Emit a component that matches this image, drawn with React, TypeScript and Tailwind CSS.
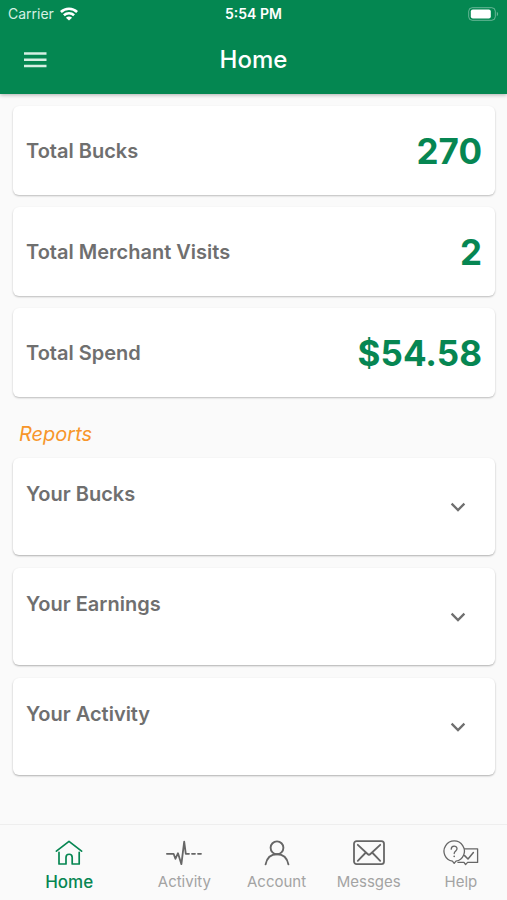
import { useState } from 'react'
import type { ReactNode } from 'react'

interface Total {
  label: string
  value: string
}

interface NavItem {
  label: string
  icon: ReactNode
}

const TOTALS: Total[] = [
  { label: 'Total Bucks', value: '270' },
  { label: 'Total Merchant Visits', value: '2' },
  { label: 'Total Spend', value: '$54.58' },
]

const REPORTS = ['Your Bucks', 'Your Earnings', 'Your Activity']

const NAV_ITEMS: NavItem[] = [
  { label: 'Home', icon: <HomeIcon /> },
  { label: 'Activity', icon: <ActivityIcon /> },
  { label: 'Account', icon: <AccountIcon /> },
  { label: 'Messges', icon: <MessagesIcon /> },
  { label: 'Help', icon: <HelpIcon /> },
]

function WifiIcon() {
  return (
    <svg width="18" height="14" viewBox="0 0 18 14" fill="none" stroke="white" strokeWidth="2.6">
      <path d="M0.9 5C5.4 0.7 12.6 0.7 17.1 5" />
      <path d="M3.9 8.3C6.8 5.6 11.2 5.6 14.1 8.3" />
      <path d="M9 13.6L5.9 10.7C7.6 9.1 10.4 9.1 12.1 10.7Z" fill="white" stroke="none" />
    </svg>
  )
}

function BatteryIcon() {
  return (
    <svg width="31" height="14" viewBox="0 0 31 14" fill="none">
      <rect x="0.7" y="0.7" width="26.6" height="12.6" rx="3.6" stroke="currentColor" strokeOpacity="0.4" />
      <rect x="2.8" y="2.4" width="20" height="9.2" rx="2" fill="currentColor" />
      <path d="M28.8 4.8C30.6 5.5 30.6 8.5 28.8 9.2Z" fill="currentColor" fillOpacity="0.4" />
    </svg>
  )
}

function MenuIcon() {
  return (
    <svg width="24" height="16" viewBox="0 0 24 16" fill="#d5f0e3">
      <path d="M1 0.3h22.5v2.5H1zM1 6.5h22.5V9H1zM1 12.7h22.5v2.5H1z" />
    </svg>
  )
}

function ChevronIcon({ open }: { open: boolean }) {
  return (
    <svg
      width="16"
      height="10"
      viewBox="0 0 16 10"
      fill="none"
      stroke="currentColor"
      strokeWidth="2.3"
      className={open ? 'rotate-180' : ''}
    >
      <path d="M1.6 1.6L8 8L14.4 1.6" />
    </svg>
  )
}

function HomeIcon() {
  return (
    <svg width="28" height="26" viewBox="0 0 28 26" fill="none" stroke="currentColor" strokeWidth="1.7" strokeLinecap="round" strokeLinejoin="round">
      <path d="M1.4 11.2L14 1.4L26.6 11.2" />
      <path d="M4 12.4V24H11V17.4C11 13.2 17.2 13.2 17.2 17.4V24H24.2V12.4" />
    </svg>
  )
}

function ActivityIcon() {
  return (
    <svg width="36" height="26" viewBox="0 0 36 26" fill="none" stroke="currentColor" strokeWidth="1.8" strokeLinecap="round" strokeLinejoin="round">
      <path d="M0.9 13.8H7.6L9.4 18.8L12 13.2L15.4 24.2L18.2 1.6L19.8 13.8H23" />
      <path d="M26 13.8H29M32 13.8H35" />
    </svg>
  )
}

function AccountIcon() {
  return (
    <svg width="26" height="26" viewBox="0 0 26 26" fill="none" stroke="currentColor" strokeWidth="1.9" strokeLinecap="round">
      <circle cx="13" cy="7.8" r="6.4" />
      <path d="M1.6 24.4C3 17.4 7.6 14.3 13 14.3C18.4 14.3 23 17.4 24.4 24.4" />
    </svg>
  )
}

function MessagesIcon() {
  return (
    <svg width="32" height="26" viewBox="0 0 32 26" fill="none" stroke="currentColor" strokeWidth="1.8" strokeLinecap="round" strokeLinejoin="round">
      <rect x="1" y="1.2" width="30" height="23" rx="2.6" />
      <path d="M4.8 4.8L14.6 14C15.5 14.9 16.5 14.9 17.4 14L27.2 4.8" />
      <path d="M4.8 20.8L12.4 13M27.2 20.8L19.6 13" />
    </svg>
  )
}

function HelpIcon() {
  return (
    <svg width="36" height="26" viewBox="0 0 36 26" fill="none" stroke="currentColor" strokeWidth="1.3" strokeLinecap="round" strokeLinejoin="round">
      <path d="M9.4 21.2A10.2 10.2 0 1 1 13 21.2L11.2 23.4Z" />
      <path d="M8.2 9.2C8.2 5.2 14 5.2 14 8.8C14 11 11.2 11 11.2 13.6" />
      <path d="M11.2 16.2V16.4" strokeWidth="1.6" />
      <path d="M21.4 8.8H34.6V22.4H24.6L22.6 24.6L21 22.4H15" />
      <path d="M21.6 15.6L25 19L30.4 12.6" strokeWidth="1.5" />
    </svg>
  )
}

function TotalCard({ label, value }: Total) {
  return (
    <div className="flex h-[89px] items-center justify-between rounded-md bg-white px-[13px] shadow-[0_1px_2px_rgba(0,0,0,0.25)]">
      <dt className="text-xl font-semibold text-[#6f6f6f]">{label}</dt>
      <dd className="text-[35px] leading-10 font-bold text-[#068652]">{value}</dd>
    </div>
  )
}

function ReportCard({ label }: { label: string }) {
  const [open, setOpen] = useState(false)

  return (
    <div className="rounded-md bg-white text-[#6f6f6f] shadow-[0_1px_2px_rgba(0,0,0,0.3)]">
      <button
        type="button"
        aria-expanded={open}
        onClick={() => setOpen(!open)}
        className="flex h-[97px] w-full items-center justify-between pr-[29px] pl-[13px] text-left"
      >
        <span className="self-start pt-[22px] text-xl font-semibold">{label}</span>
        <ChevronIcon open={open} />
      </button>
      {open && <p className="px-[13px] pb-4 text-base">No data yet.</p>}
    </div>
  )
}

export default function App() {
  const [active, setActive] = useState('Home')

  return (
    <div className="flex min-h-screen flex-col bg-[#fafafa] font-['Inter',sans-serif]">
      <header className="bg-[#048751] pb-0.5 text-white shadow-[0_1px_4px_rgba(0,0,0,0.3)]">
        {/* Status bar */}
        <div className="grid h-7 grid-cols-3 items-center px-2 text-sm">
          <div className="flex items-center gap-1.5 text-[#d5f0e3]">
            <span>Carrier</span>
            <WifiIcon />
          </div>
          <span className="text-center font-semibold">5:54 PM</span>
          <div className="flex justify-end">
            <BatteryIcon />
          </div>
        </div>

        {/* Toolbar */}
        <div className="grid h-16 grid-cols-[1fr_auto_1fr] items-center px-[23px]">
          <button type="button" aria-label="Menu" className="justify-self-start">
            <MenuIcon />
          </button>
          <h1 className="text-2xl font-medium">Home</h1>
        </div>
      </header>

      <main className="flex-1 pt-3 pr-3 pb-12 pl-[13px]">
        <dl className="flex flex-col gap-3">
          {TOTALS.map((total) => (
            <TotalCard key={total.label} label={total.label} value={total.value} />
          ))}
        </dl>

        <h2 className="mt-[23px] mb-2.5 px-1.5 text-xl text-[#f7962a] italic">Reports</h2>
        <div className="flex flex-col gap-[13px]">
          {REPORTS.map((report) => (
            <ReportCard key={report} label={report} />
          ))}
        </div>
      </main>

      {/* Bottom tabs, the active one is wider */}
      <nav className="flex h-[76px] border-t border-[#eeeeee] bg-[#fafafa]">
        {NAV_ITEMS.map((item) => (
          <button
            key={item.label}
            type="button"
            onClick={() => setActive(item.label)}
            className={`flex min-w-0 flex-col items-center pt-[15px] ${
              active === item.label ? 'flex-[3] text-[#068652]' : 'flex-[2] text-[#666666]'
            }`}
          >
            {item.icon}
            <span
              className={
                active === item.label
                  ? 'mt-1 text-[17px] leading-6 font-medium'
                  : 'mt-1 text-[15px] leading-6 text-[#a3a3a3]'
              }
            >
              {item.label}
            </span>
          </button>
        ))}
      </nav>
    </div>
  )
}
